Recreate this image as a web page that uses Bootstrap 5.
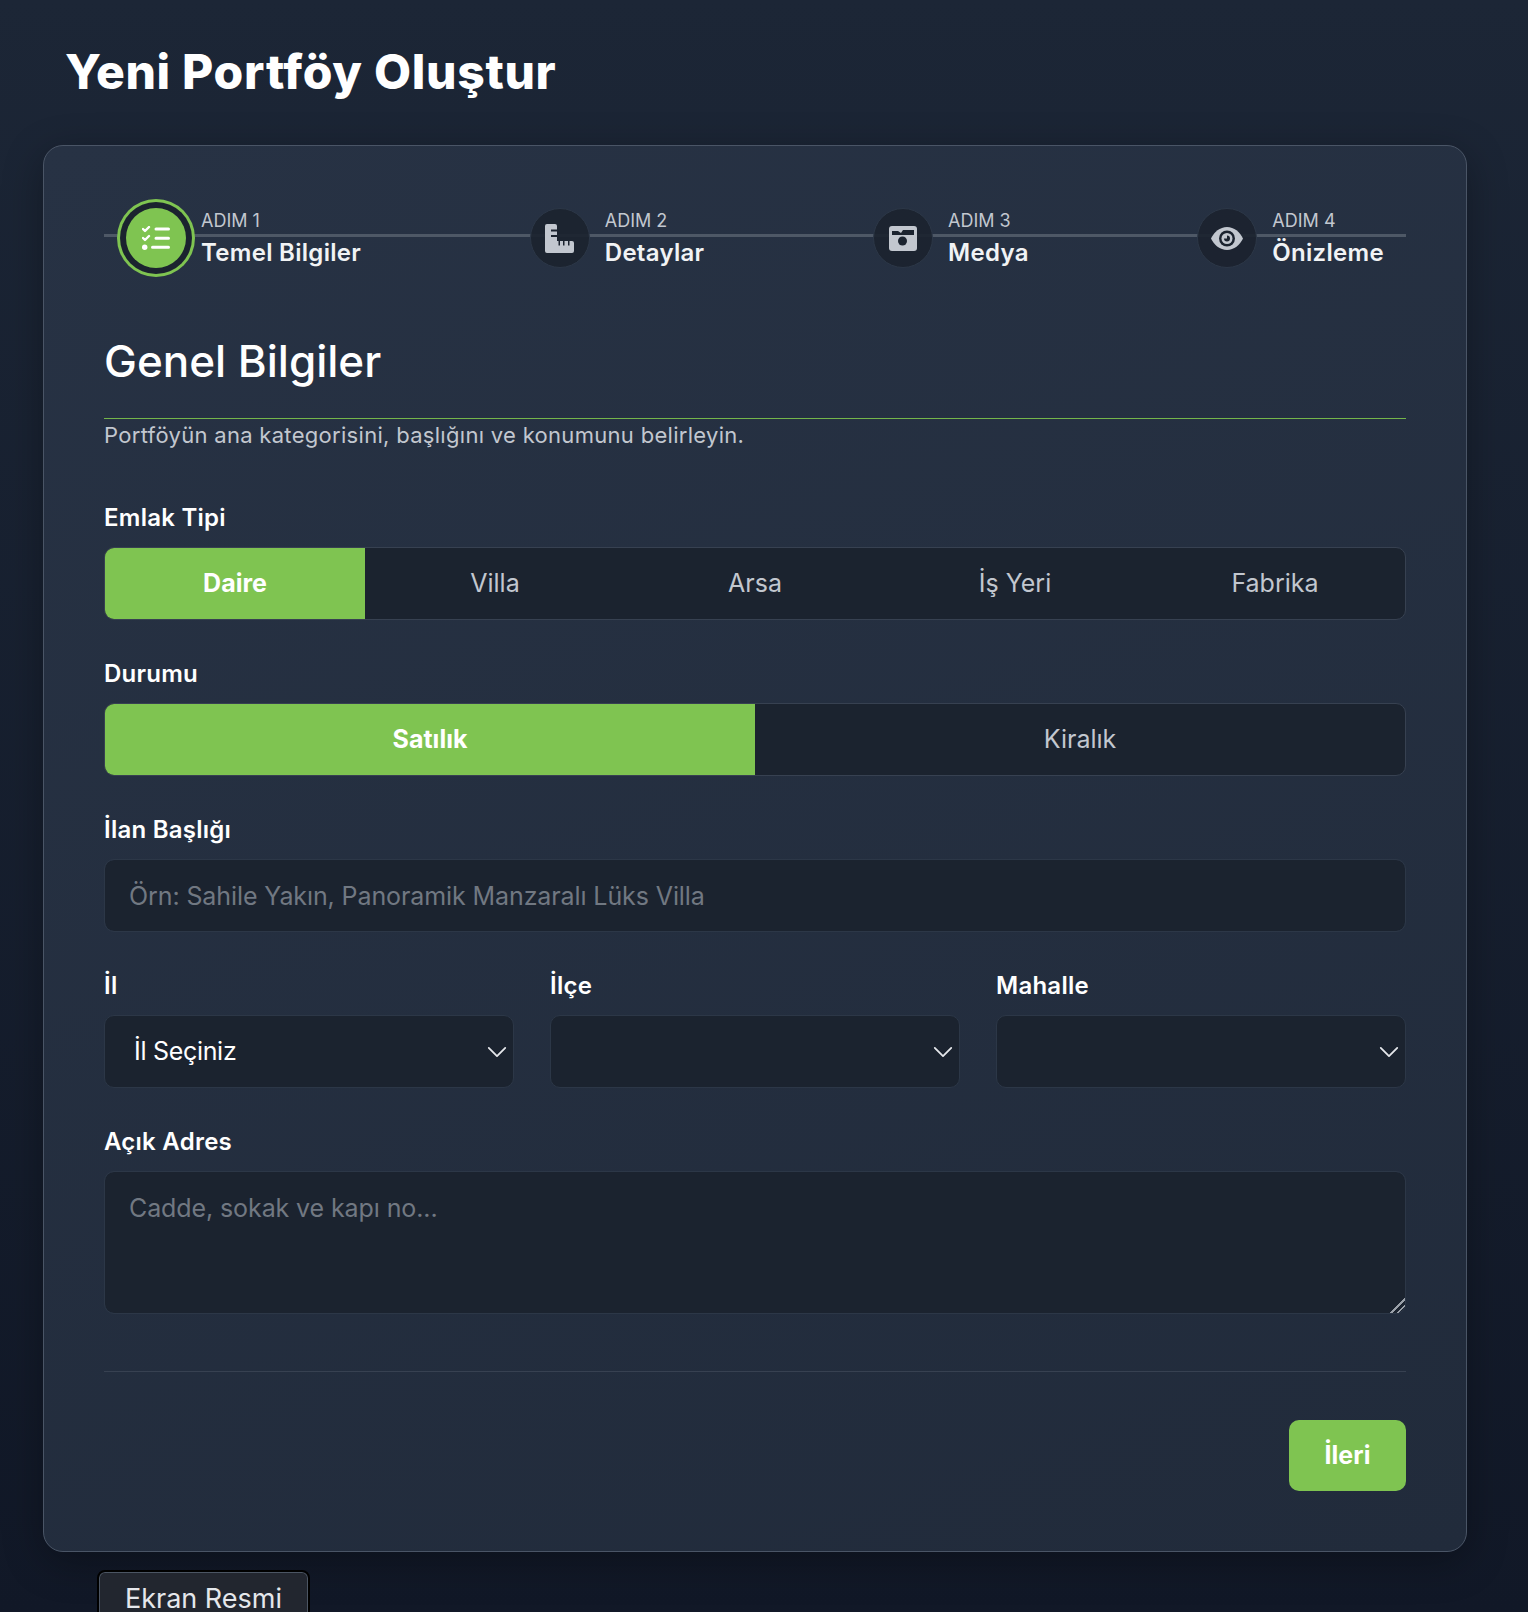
<!DOCTYPE html>
<html lang="tr">

<head>
    <meta charset="UTF-8">
    <title>Yeni Portföy Oluştur</title>
    <link rel="stylesheet" href="https://cdn.jsdelivr.net/npm/bootstrap@5.3.3/dist/css/bootstrap.min.css">
    <style>
        html, body { height: 100%; }
        body {
            background: linear-gradient(180deg, #1c2636 0%, #111827 100%);
            background-color: #111827;
            font-family: Inter, "Noto Sans", sans-serif;
            color: #fff;
            overflow: hidden;
        }
        .page-wrap { padding: 0 61px 0 43px; }
        .page-title { font-weight: 800; font-size: 48px; line-height: 45px; margin: 0; padding: 49px 0 51px 22px; letter-spacing: .7px; }
        .form-panel { background: linear-gradient(160deg, #273244 0%, #212b3b 100%); border: 1px solid #4a5566; border-radius: 20px; padding: 52px 60px 60px; box-shadow: 0 10px 40px rgba(0, 0, 0, .3); }
        .steps { position: relative; height: 80px; margin-bottom: 52px; }
        .steps::before { content: ""; position: absolute; left: 0; right: 0; top: 36px; height: 3px; background: #4e5866; }
        .step-item { position: relative; gap: 15px; padding: 0 22px; }
        .step-dot { flex: none; width: 60px; height: 60px; border-radius: 50%; background: rgba(27, 35, 47, .92); border: 1px solid #2c3747; color: #c2c7cf; }
        .step-item.on .step-dot { background: #7fc451; border: 0; color: #fff; box-shadow: 0 0 0 6px #1b232f, 0 0 0 9px #7fc451; }
        .step-txt { padding-top: 3px; }
        .step-no { font-size: 18px; line-height: 26px; color: #c2c7cf; }
        .step-name { font-size: 24px; line-height: 37px; font-weight: 600; color: #f1f3f5; letter-spacing: .3px; }
        .sec-title { font-size: 44px; font-weight: 500; line-height: 62px; padding-bottom: 26px; margin: 0; border-bottom: 1px solid #74b54a; }
        .sec-sub { font-size: 22px; line-height: 32px; color: #c2c7cf; margin: 0 0 48px; letter-spacing: .3px; }
        .fld { margin-bottom: 35px; }
        .fld-label { display: block; font-size: 24px; line-height: 37px; font-weight: 600; margin-bottom: 11px; letter-spacing: .25px; }
        .seg { border: 1px solid #374151; border-radius: 10px; overflow: hidden; background: #1b232f; height: 73px; }
        .seg-opt { flex: 1; font-size: 25px; color: #c2c7cf; }
        .seg-opt.on { background: #7fc451; color: #fff; font-weight: 700; }
        .inp, .inp:focus { background-color: #1b232f; border: 1px solid #2c3747; border-radius: 10px; color: #fff; height: 73px; font-size: 25px; padding: 0 24px; box-shadow: none; letter-spacing: -.1px; }
        .inp::placeholder { color: #717882; }
        textarea.inp { height: 143px; padding: 18px 24px; }
        textarea.inp::-webkit-resizer { background: linear-gradient(135deg, transparent 50%, #9aa0a8 50%, #9aa0a8 58%, transparent 58%, transparent 72%, #9aa0a8 72%, #9aa0a8 80%, transparent 80%); }
        .sel, .sel:focus { background-color: #1b232f; border: 1px solid #2c3747; border-radius: 10px; color: #fff; height: 73px; font-size: 25px; padding: 0 29px; box-shadow: none; letter-spacing: -.3px; background-image: url("data:image/svg+xml,%3csvg xmlns='http://www.w3.org/2000/svg' viewBox='0 0 16 16'%3e%3cpath fill='none' stroke='%23e5e7eb' stroke-linecap='round' stroke-linejoin='round' stroke-width='1.3' d='m2 5 6 6 6-6'/%3e%3c/svg%3e"); background-size: 22px 22px; background-position: right 5px center; }
        .loc-row { gap: 36px; }
        .foot-line { border-top: 1px solid #374151; margin-top: 57px; padding-top: 48px; }
        .next-btn { background: #7fc451; color: #fff; border: 0; border-radius: 10px; font-size: 25px; font-weight: 700; width: 117px; height: 71px; }
        .next-btn:hover { background: #7fc451; color: #fff; }
        .shot-tab { margin: 18px 0 0 54px; display: block; width: 213px; height: 60px; background: #22262f; border: 2px solid #000; box-shadow: inset 0 0 0 1px #4b5563; border-radius: 8px 8px 0 0; font-size: 27px; text-align: center; line-height: 54px; color: #e5e7eb; }
    </style>
</head>

<body>
    <div class="page-wrap">
        <h1 class="page-title">Yeni Portföy Oluştur</h1>
        <div class="form-panel">
            <div class="steps d-flex justify-content-between align-items-center">
                <div class="step-item on d-flex align-items-center">
                    <div class="step-dot d-flex align-items-center justify-content-center">
                        <svg width="28" height="24" viewBox="0 0 28 24" fill="none" stroke="currentColor" stroke-width="3" stroke-linecap="round" stroke-linejoin="round"><path d="M1 3l2 2 4-4M1 12l2 2 4-4" stroke-width="2.400"/><path d="M14 3h12.500M14 12.300h12.500M10.500 21.300h16"/><circle cx="2.700" cy="21.300" r="2.700" fill="currentColor" stroke="none"/></svg>
                    </div>
                    <div class="step-txt"><div class="step-no">ADIM 1</div><div class="step-name">Temel Bilgiler</div></div>
                </div>
                <div class="step-item d-flex align-items-center">
                    <div class="step-dot d-flex align-items-center justify-content-center">
                        <svg width="29" height="29" viewBox="0 0 29 29" fill="currentColor"><path d="M0 2a2 2 0 0 1 2-2h8a2 2 0 0 1 2 2v15h15a2 2 0 0 1 2 2v8a2 2 0 0 1-2 2H2a2 2 0 0 1-2-2z"/><path fill="#1b232f" d="M6 5.500h6v2H6zM6 11h6v2H6zM13.500 17h1.500v4.500h-1.500zM18 17h1.500v4.500H18zM23 17h1.500v4.500H23z"/></svg>
                    </div>
                    <div class="step-txt"><div class="step-no">ADIM 2</div><div class="step-name">Detaylar</div></div>
                </div>
                <div class="step-item d-flex align-items-center">
                    <div class="step-dot d-flex align-items-center justify-content-center">
                        <svg width="28" height="26" viewBox="0 0 28 26" fill="currentColor"><path d="M3 1h22a3 3 0 0 1 3 3v19a3 3 0 0 1-3 3H3a3 3 0 0 1-3-3V4a3 3 0 0 1 3-3z"/><path fill="#1b232f" d="M3 10V6h6l3 2 2-3h11v5z"/><circle cx="13.500" cy="16" r="5"/><circle cx="13.500" cy="16" r="4.500" fill="#1b232f"/></svg>
                    </div>
                    <div class="step-txt"><div class="step-no">ADIM 3</div><div class="step-name">Medya</div></div>
                </div>
                <div class="step-item d-flex align-items-center">
                    <div class="step-dot d-flex align-items-center justify-content-center">
                        <svg width="32" height="23" viewBox="0 0 32 23" fill="currentColor"><path d="M16 0C9 0 3 5 0 11.500 3 18 9 23 16 23s13-5 16-11.500C29 5 23 0 16 0z"/><circle cx="16" cy="11.500" r="8" fill="#1b232f"/><circle cx="16" cy="11.500" r="5.500"/><path fill="#1b232f" d="M16 8.500a3 3 0 1 1-3 3h3z"/></svg>
                    </div>
                    <div class="step-txt"><div class="step-no">ADIM 4</div><div class="step-name">Önizleme</div></div>
                </div>
            </div>

            <h2 class="sec-title">Genel Bilgiler</h2>
            <p class="sec-sub">Portföyün ana kategorisini, başlığını ve konumunu belirleyin.</p>

            <div class="fld">
                <label class="fld-label">Emlak Tipi</label>
                <div class="seg d-flex">
                    <div class="seg-opt on d-flex align-items-center justify-content-center">Daire</div>
                    <div class="seg-opt d-flex align-items-center justify-content-center">Villa</div>
                    <div class="seg-opt d-flex align-items-center justify-content-center">Arsa</div>
                    <div class="seg-opt d-flex align-items-center justify-content-center">İş Yeri</div>
                    <div class="seg-opt d-flex align-items-center justify-content-center">Fabrika</div>
                </div>
            </div>
            <div class="fld">
                <label class="fld-label">Durumu</label>
                <div class="seg d-flex">
                    <div class="seg-opt on d-flex align-items-center justify-content-center">Satılık</div>
                    <div class="seg-opt d-flex align-items-center justify-content-center">Kiralık</div>
                </div>
            </div>
            <div class="fld">
                <label class="fld-label">İlan Başlığı</label>
                <input type="text" class="form-control inp" placeholder="Örn: Sahile Yakın, Panoramik Manzaralı Lüks Villa">
            </div>
            <div class="fld d-flex loc-row">
                <div class="flex-fill w-100">
                    <label class="fld-label">İl</label>
                    <select class="form-select sel"><option>İl Seçiniz</option></select>
                </div>
                <div class="flex-fill w-100">
                    <label class="fld-label">İlçe</label>
                    <select class="form-select sel"></select>
                </div>
                <div class="flex-fill w-100">
                    <label class="fld-label">Mahalle</label>
                    <select class="form-select sel"></select>
                </div>
            </div>
            <div>
                <label class="fld-label">Açık Adres</label>
                <textarea class="form-control inp" placeholder="Cadde, sokak ve kapı no..."></textarea>
            </div>
            <div class="foot-line d-flex justify-content-end">
                <button class="btn next-btn">İleri</button>
            </div>
        </div>
        <div class="shot-tab">Ekran Resmi</div>
    </div>
    <script src="https://cdn.jsdelivr.net/npm/bootstrap@5.3.3/dist/js/bootstrap.bundle.min.js"></script>
</body>

</html>
